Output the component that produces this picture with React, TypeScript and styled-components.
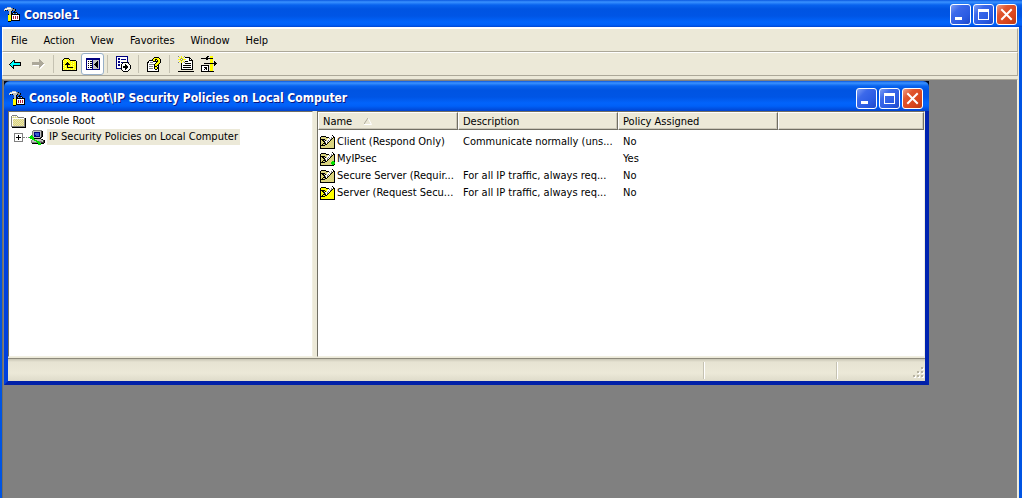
import React from "react";
import styled, { createGlobalStyle, css } from "styled-components";

const GlobalStyle = createGlobalStyle`
  *, *::before, *::after { box-sizing: border-box; }
  body {
    margin: 0;
    background: #808080;
    color: #000;
    font: 11px/16px "DejaVu Sans Condensed", Tahoma, sans-serif;
  }
  button { font: inherit; color: inherit; }
`;

/* ---------- pixel icons ---------- */

const palette: Record<string, string> = {
  k: "#000000",
  d: "#404040",
  g: "#808080",
  l: "#c0c0c0",
  w: "#ffffff",
  y: "#ffff00",
  f: "#ffff90",
  h: "#e8e4b8",
  o: "#dcd478",
  n: "#000080",
  b: "#3a5fcd",
  c: "#00ffff",
  e: "#00e000",
  r: "#b02040",
  s: "#aca899",
};

const icons = {
  back: [
    "....kk.......",
    "...kck.......",
    "..kcckkkkkkk.",
    ".kccccccccck.",
    "kcccccccccck.",
    ".kcckkkkkkkk.",
    "..kck........",
    "...kk........",
    "....k........",
  ],
  forward: [
    ".......s.....",
    ".......ss....",
    ".......sss...",
    "sssssssssss..",
    "ssssssssssss.",
    "sssssssssssww",
    ".wwwwwwsssww.",
    ".......ssww..",
    ".......sww...",
    "........w....",
  ],
  up: [
    "..kkkkk........",
    ".kyfyyyk.......",
    "kyyyfyyykkkkkk.",
    "kfyyyfyyyfyyyfk",
    "kyyyykyyyyyfyyk",
    "kfyykkkyyfyyyyk",
    "kyykkkkkyyyfyyk",
    "kfyyykyyyfyyyyk",
    "kyyfykyyyyyfyyk",
    "kfyyykkkkkkyyyk",
    "kyyfyyyfyyyfyyk",
    "kfyyyfyyyfyyyfk",
    "kkkkkkkkkkkkkkk",
  ],
  tree: [
    "nnnnnnnnnnnnnn",
    "nnnnnnnnnnnnnn",
    "nwwwwwnlllllln",
    "nwkwkknllllkln",
    "nwwwwwnlllkkln",
    "nwkwkknllkkkln",
    "nwwwwwnlkkkkln",
    "nwkwkknllkkkln",
    "nwwwwwnlllkkln",
    "nwkwkknllllkln",
    "nwwwwwnlllllln",
    "nnnnnnnnnnnnnn",
  ],
  exportList: [
    "nnnnnnnnnnnn....",
    "nwwwwwwwwwwn....",
    "nwnnwwwwwwwn....",
    "nwnnwnnnnnwn....",
    "nwwwwwwwwwwn....",
    "nwnnwwwwwwwn....",
    "nwnnwnnkkkkkn...",
    "nwwwwwkwwwwwk...",
    "nwnnwkwwwkwwwk..",
    "nwnnwkwwwkkwwwk.",
    "nwwwwkwkkkkkwwk.",
    "nwwwwkwkkkkkwwk.",
    "nnnnnkwwwkkwwwk.",
    ".....kwwwkwwwk..",
    "......kwwwwwk...",
    ".......kkkkk....",
  ],
  help: [
    ".......kkkkk...",
    "......kyyyyyk..",
    ".....kyykkyyyk.",
    "..kkkkyyk.kyyk.",
    ".kwwwwkkkkkyyk.",
    "kkwgggwwwkyyyk.",
    "kwwwwwwwkyyyk..",
    "kwgggggkyyyk...",
    "kwwwwwwkyykk...",
    "kwggggwkkkwk...",
    "kwwwwwwkyykk...",
    "kwggggwkyykk...",
    "kwwwwwwwkkwk...",
    "kwwwwwwwwwwk...",
    "kkkkkkkkkkkk...",
  ],
  newPolicy: [
    "g..y..g.........",
    ".y.y.y.kkkkk....",
    "..ygy..wwwwkk...",
    "yygwgyyywwwkwk..",
    "..ygy..wwwwkkkk.",
    ".y.y.y.kkkwwwwk.",
    "g..y..gwwwwwwwk.",
    "...kwwwkkkkkkwk.",
    "...kwwwwwwwwwwk.",
    "...kwkkkkkkkkwk.",
    "...kwwwwwwwwwwk.",
    "...kwkkkkkkkkwk.",
    "...kwwwwwwwwwwk.",
    "...kkkkkkkkkkkk.",
    "................",
    "kkkkkkkkkkkkkkkk",
  ],
  assign: [
    "......kk.yyy....",
    ".....kk..yyy....",
    "kkkkkkkkkkkk....",
    ".....kk..yyy....",
    ".........yyy....",
    ".........yyy.k..",
    ".........yyy.kk.",
    "...kkkkkkkkkkkkk",
    ".........yyy.kk.",
    "kkkkkkkk.yyy.k..",
    "kwwwwwwk.yyy....",
    "kwwkkkwk.yyy....",
    "kwwwkkwk.yyy....",
    "kwwkwkwk.yyy....",
    "kwwwwwwk.yyy....",
    "kkkkkkkkkkkkk...",
  ],
  mmc: [
    "...llll.........",
    ".llwwwwlgk......",
    "lwwlllllgggk....",
    "lk.kllllkggk....",
    ".....llk..k.....",
    ".....llk.kkkk...",
    ".....llkkl..lk..",
    "....kllkkkkkkkkk",
    "....yyykwwwwwwwk",
    "....yyykwrwrwrwk",
    "....yyykwrwrwrwk",
    "....yyykwrwrwrwk",
    "....yyykwwwwwwwk",
    "....yyykkkkkkkkk",
    "....kkk.........",
  ],
  folder: [
    ".ggggg.........",
    "gwhwhwg........",
    "ghohohogggggg..",
    "gwwwwwwwwwwwwgk",
    "gwhohohohohohgk",
    "gwohohohohohogk",
    "gwhohohohohohgk",
    "gwohohohohohogk",
    "gwhohohohohohgk",
    "gwohohohohohogk",
    "gwhohohohohohgk",
    "ggggggggggggggk",
    ".kkkkkkkkkkkkkk",
  ],
  computer: [
    "....ggggggggg...",
    "...glllllllldk..",
    "...glnnnnnnldk..",
    "...glnbbbbnldk..",
    "...glnbbbbnldk..",
    "..eglnnbbbnldk..",
    ".eeelnnnnnnldk..",
    "eeeeelllllldk...",
    ".eeeekkkkkkk....",
    "...eeelllllldk..",
    "..glleeelllllldk",
    "..glllleeegggldk",
    "..ggggggeeegdddk",
    "...kkkkkkeeekkk.",
    ".........eee....",
  ],
  policy: [
    "...........wk..",
    ".kkkkk....wwwk.",
    "kyyyyykkkwwgwkk",
    "kyyyyyyywgwgkyk",
    "kkkkkyywwwgkyyk",
    "kykkykywgwkyyyk",
    "kyykkwwgwkyyyyk",
    "kyyykgwgkyyyyyk",
    "kyykkkwkyyyyyyk",
    "kykyykkyyyyyyyk",
    "kkkkkyyyyyyyyyk",
    "kyyyyyyyyyyyyyk",
    "kyyyyyyyyyyyyyk",
    "kkkkkkkkkkkkkkk",
  ],
  policyAssigned: [
    "...........wk..",
    ".kkkkk....wwwk.",
    "kyyyyykkkwwgwkk",
    "kyyyyyyywgwgkyk",
    "kkkkkyywwwgkyyk",
    "kykkykywgwkyyyk",
    "kyykkwwgwkyyyyk",
    "kyyykgwgkyyyyyk",
    "kyykkkwkyyyyyyk",
    "kykyykkyyyyyeek",
    "kkkkkyyyyyyeeee",
    "kyyyyyyyyyyeeee",
    "kyyyyyyyyyyyeek",
    "kkkkkkkkkkkkkk.",
  ],
};

type IconName = keyof typeof icons;

const PixelSvg = styled.svg`
  display: block;
  flex: none;
`;

function PixelIcon({ name, dull }: { name: IconName; dull?: boolean }) {
  const rows: string[] = icons[name];
  const width = Math.max(...rows.map((r) => r.length));
  return (
    <PixelSvg width={width} height={rows.length} viewBox={`0 0 ${width} ${rows.length}`} shapeRendering="crispEdges" aria-hidden="true">
      {rows.flatMap((row, y) =>
        [...row].map((ch, x) =>
          ch === "." ? null : (
            <rect key={`${x}-${y}`} x={x} y={y} width="1" height="1" fill={dull && ch === "y" ? ((x + y) % 2 ? "#c8c4a0" : "#ece460") : palette[ch]} />
          )
        )
      )}
    </PixelSvg>
  );
}

/* ---------- window chrome ---------- */

const TitleBar = styled.header<{ $child?: boolean }>`
  display: flex;
  align-items: center;
  gap: 4px;
  height: 27px;
  padding: 2px 5px 0 4px;
  background: linear-gradient(#0a58e0 0, #3a92ff 2px, #0863ee 5px, #0054e2 9px, #0055e5 16px, #0264fb 22px, #0060f8 25px, #0144cf 100%);
  ${(p) => p.$child && css`
    height: 30px;
    border-radius: 6px 6px 0 0;
    padding: 4px 6px 0 5px;
  `}
`;

const Title = styled.h1`
  flex: 1;
  margin: 0;
  overflow: hidden;
  white-space: nowrap;
  color: #fff;
  font: bold 12px/18px "DejaVu Sans Condensed", "Trebuchet MS", sans-serif;
  text-shadow: 1px 1px 0 #0a1883;
`;

const Controls = styled.div`
  display: flex;
  gap: 2px;
`;

const ControlButton = styled.button<{ $close?: boolean }>`
  display: grid;
  place-items: center;
  width: 21px;
  height: 21px;
  padding: 0;
  border: 1px solid #fff;
  border-radius: 3px;
  background: ${(p) =>
    p.$close
      ? "linear-gradient(135deg, #f0a08a 0, #e0562f 30%, #d8441c 70%, #b83a18 100%)"
      : "linear-gradient(135deg, #7f9ff4 0, #3c69ea 30%, #2a5be2 70%, #1e48c8 100%)"};
`;

function WindowControls() {
  return (
    <Controls>
      <ControlButton aria-label="Minimize">
        <svg width="13" height="13" shapeRendering="crispEdges"><rect x="1" y="9" width="7" height="3" fill="#fff" /></svg>
      </ControlButton>
      <ControlButton aria-label="Maximize">
        <svg width="13" height="13" shapeRendering="crispEdges"><path d="M1 1h11v11H1zM2 4v7h9V4z" fill="#fff" fillRule="evenodd" /></svg>
      </ControlButton>
      <ControlButton $close aria-label="Close">
        <svg width="13" height="13"><path d="M2 2l9 9M11 2l-9 9" stroke="#fff" strokeWidth="2" strokeLinecap="square" /></svg>
      </ControlButton>
    </Controls>
  );
}

const AppWindow = styled.div`
  display: flex;
  flex-direction: column;
  min-height: 100vh;
  background: #0054e3;
`;

const AppBody = styled.div`
  flex: 1;
  display: flex;
  flex-direction: column;
  margin: 0 3px 0 2px;
  background: #ece9d8;
  border-top: 1px solid #fff;
`;

const Bar = styled.div`
  display: flex;
  align-items: center;
  height: 24px;
  margin-right: 1px;
  border: 1px solid;
  border-color: #fff #aca899 #aca899 #fff;
`;

const MenuBar = styled(Bar).attrs({ as: "nav" })`
  padding-top: 1px;
`;

const MenuItem = styled.button`
  padding: 0 8px;
  border: 0;
  background: none;
`;

const ToolBar = styled(Bar)`
  padding-left: 1px;
  margin-bottom: 3px;
`;

const ToolButton = styled.button<{ $active?: boolean }>`
  display: grid;
  place-items: center;
  width: 23px;
  height: 22px;
  padding: 0;
  border: 1px solid ${(p) => (p.$active ? "#98b0c8" : "transparent")};
  border-radius: 3px;
  background: ${(p) => (p.$active ? "#fff" : "none")};
`;

const Separator = styled.span`
  width: 1px;
  height: 18px;
  margin: 0 4px 0 3px;
  background: #c5c2b2;
`;

const Desktop = styled.main`
  flex: 1;
  padding: 1px;
  margin-right: 1px;
  border: 1px solid #716f64;
  border-top-color: #aca899;
  border-right-color: #f1efe2;
  border-bottom: 0;
  background: #808080;
`;

const ChildWindow = styled.section`
  max-width: 925px;
  border: solid;
  border-width: 0 4px 4px;
  border-color: #0040dd #0023b0 #0020a8 #0040dd;
  background: #0054e3;
`;

const ChildTitle = styled.div`
  margin: 0 -4px;
  background: #000820;
`;

const Panes = styled.div`
  display: flex;
  min-height: 247px;
  padding-bottom: 1px;
  background: #ece9d8;
`;

const Pane = styled.div`
  border: 1px solid;
  border-color: #716f64 #f1efe2 #f1efe2 #716f64;
  background: #fff;
`;

const TreePane = styled(Pane)`
  width: 305px;
  flex: none;
  margin-right: 4px;
  padding-top: 1px;
`;

const ListPane = styled(Pane)`
  flex: 1;
  min-width: 0;
`;

const TreeRow = styled.div`
  display: flex;
  align-items: center;
  height: 16px;
  padding-left: 2px;
  white-space: nowrap;
`;

const TreeChild = styled(TreeRow)`
  padding-left: 5px;
`;

const TreeLabel = styled.span<{ $selected?: boolean }>`
  margin-left: 2px;
  padding: 0 2px;
  background: ${(p) => (p.$selected ? "#ece9d8" : "none")};
`;

const Expander = styled.button`
  display: grid;
  place-items: center;
  width: 9px;
  height: 9px;
  padding: 0;
  border: 1px solid #808080;
  background: #fff;
`;

const Dots = styled.span`
  width: 6px;
  border-top: 1px dotted #808080;
`;

const List = styled.table`
  width: 100%;
  table-layout: fixed;
  border-collapse: separate;
  border-spacing: 0;
`;

const Th = styled.th<{ $width?: number }>`
  width: ${(p) => (p.$width ? `${p.$width}px` : "auto")};
  height: 18px;
  padding: 1px 4px 0;
  border: 1px solid;
  border-color: #fff #716f64 #716f64 #fff;
  background: #ece9d8;
  box-shadow: inset -1px -1px 0 #cbc7b8;
  font-weight: normal;
  text-align: left;
  line-height: 15px;
`;

const SortMark = styled.svg`
  margin-left: 12px;
`;

const Td = styled.td`
  height: 17px;
  padding: 0 2px 0 5px;
  white-space: nowrap;
  line-height: 17px;
  &:first-child { padding-left: 2px; }
`;

const ListBody = styled.tbody`
  &::before {
    content: "";
    display: table-row;
    height: 3px;
  }
`;

const NameCell = styled.div`
  display: flex;
  align-items: center;
  gap: 2px;
`;

const StatusBar = styled.footer`
  display: flex;
  align-items: center;
  justify-content: flex-end;
  height: 23px;
  border-top: 1px solid #8d8a7c;
  background: linear-gradient(#c8c5b4 0, #e6e3d2 3px, #ece9d8 14px, #dedbca 100%);
`;

const StatusCell = styled.span<{ $width: number }>`
  width: ${(p) => p.$width}px;
  height: 17px;
  border-left: 1px solid #c5c2b2;
  box-shadow: inset 1px 0 0 #fff;
`;

const GripCell = styled(StatusCell)`
  display: flex;
  align-items: flex-end;
  justify-content: flex-end;
`;

const policies = [
  { name: "Client (Respond Only)", description: "Communicate normally (uns...", assigned: "No", dull: true },
  { name: "MyIPsec", description: "", assigned: "Yes", active: true, dull: true },
  { name: "Secure Server (Requir...", description: "For all IP traffic, always req...", assigned: "No", dull: true },
  { name: "Server (Request Secu...", description: "For all IP traffic, always req...", assigned: "No" },
];

export default function App() {
  return (
    <AppWindow>
      <GlobalStyle />
      <TitleBar>
        <PixelIcon name="mmc" />
        <Title>Console1</Title>
        <WindowControls />
      </TitleBar>
      <AppBody>
        <MenuBar>
          {["File", "Action", "View", "Favorites", "Window", "Help"].map((m) => (
            <MenuItem key={m}>{m}</MenuItem>
          ))}
        </MenuBar>
        <ToolBar role="toolbar">
          <ToolButton aria-label="Back"><PixelIcon name="back" /></ToolButton>
          <ToolButton aria-label="Forward" disabled><PixelIcon name="forward" /></ToolButton>
          <Separator />
          <ToolButton aria-label="Up one level"><PixelIcon name="up" /></ToolButton>
          <ToolButton aria-label="Show console tree" $active><PixelIcon name="tree" /></ToolButton>
          <Separator />
          <ToolButton aria-label="Export list"><PixelIcon name="exportList" /></ToolButton>
          <Separator />
          <ToolButton aria-label="Help"><PixelIcon name="help" /></ToolButton>
          <Separator />
          <ToolButton aria-label="Create policy"><PixelIcon name="newPolicy" /></ToolButton>
          <ToolButton aria-label="Assign policy"><PixelIcon name="assign" /></ToolButton>
        </ToolBar>
        <Desktop>
          <ChildWindow>
            <ChildTitle>
              <TitleBar $child>
                <PixelIcon name="mmc" />
                <Title as="h2">Console Root\IP Security Policies on Local Computer</Title>
                <WindowControls />
              </TitleBar>
            </ChildTitle>
            <Panes>
              <TreePane>
                <TreeRow>
                  <PixelIcon name="folder" />
                  <TreeLabel>Console Root</TreeLabel>
                </TreeRow>
                <TreeChild>
                  <Expander aria-label="Expand">
                    <svg width="7" height="7" shapeRendering="crispEdges"><path d="M3 1h1v2h2v1H4v2H3V4H1V3h2z" /></svg>
                  </Expander>
                  <Dots />
                  <PixelIcon name="computer" />
                  <TreeLabel $selected>IP Security Policies on Local Computer</TreeLabel>
                </TreeChild>
              </TreePane>
              <ListPane>
                <List>
                  <thead>
                    <tr>
                      <Th $width={140}>
                        Name
                        <SortMark width="8" height="7" aria-hidden="true">
                          <path d="M0 6.5h7.5L4 0" fill="none" stroke="#fff" />
                          <path d="M0 6L4 0" stroke="#aca899" />
                        </SortMark>
                      </Th>
                      <Th $width={160}>Description</Th>
                      <Th $width={160}>Policy Assigned</Th>
                      <Th aria-label="Empty" />
                    </tr>
                  </thead>
                  <ListBody>
                    {policies.map((p) => (
                      <tr key={p.name}>
                        <Td>
                          <NameCell>
                            <PixelIcon name={p.active ? "policyAssigned" : "policy"} dull={p.dull} />
                            {p.name}
                          </NameCell>
                        </Td>
                        <Td>{p.description}</Td>
                        <Td>{p.assigned}</Td>
                        <Td />
                      </tr>
                    ))}
                  </ListBody>
                </List>
              </ListPane>
            </Panes>
            <StatusBar>
              <StatusCell $width={133} />
              <GripCell $width={89}>
                <svg width="12" height="12" shapeRendering="crispEdges" aria-hidden="true">
                  {[[8, 0], [4, 4], [8, 4], [0, 8], [4, 8], [8, 8]].map(([x, y]) => (
                    <g key={`${x}-${y}`}>
                      <rect x={x + 1} y={y + 1} width="2" height="2" fill="#fff" />
                      <rect x={x} y={y} width="2" height="2" fill="#b8b4a3" />
                    </g>
                  ))}
                </svg>
              </GripCell>
            </StatusBar>
          </ChildWindow>
        </Desktop>
      </AppBody>
    </AppWindow>
  );
}
